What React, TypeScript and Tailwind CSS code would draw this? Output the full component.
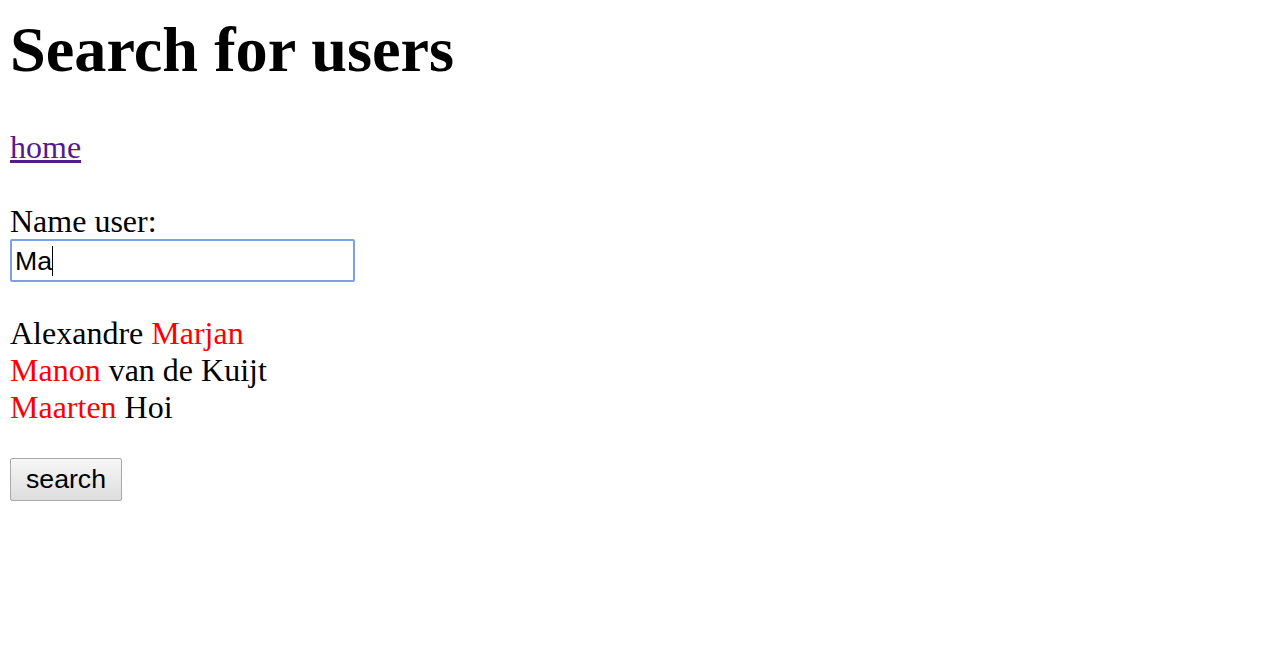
export default function App() {
  return (
    <div className="min-h-screen bg-white px-[10px] pt-[13px] text-black text-[32px] leading-[1.149]" style={{ fontFamily: '"Liberation Serif", serif' }}>
      <h1 className="text-[64.3px] font-bold leading-[1.149] mb-[42px]">Search for users</h1>
      <a href="#" className="text-[#551a8b] underline">home</a>
      <div className="mt-[37px]">Name user:</div>
      <div className="w-[345px] h-[43px] border-2 border-[#7ba1e9] rounded-[2px] flex items-center pl-[3px] text-[26.67px]" style={{ fontFamily: '"Liberation Sans", sans-serif' }}>
        <span>Ma</span>
        <span className="inline-block w-px h-[30px] bg-black" />
      </div>
      <div className="mt-[33px]">
        <div>Alexandre <span className="text-[#ff0000]">Marjan</span></div>
        <div><span className="text-[#ff0000]">Manon</span> van de Kuijt</div>
        <div><span className="text-[#ff0000]">Maarten</span> Hoi</div>
      </div>
      <button className="mt-[32px] w-[112px] h-[43px] border border-[#a9a9a9] rounded-[2px] bg-gradient-to-b from-[#f7f7f7] to-[#dddddd] text-[26.67px] leading-none" style={{ fontFamily: '"Liberation Sans", sans-serif' }}>
        search
      </button>
    </div>
  );
}
